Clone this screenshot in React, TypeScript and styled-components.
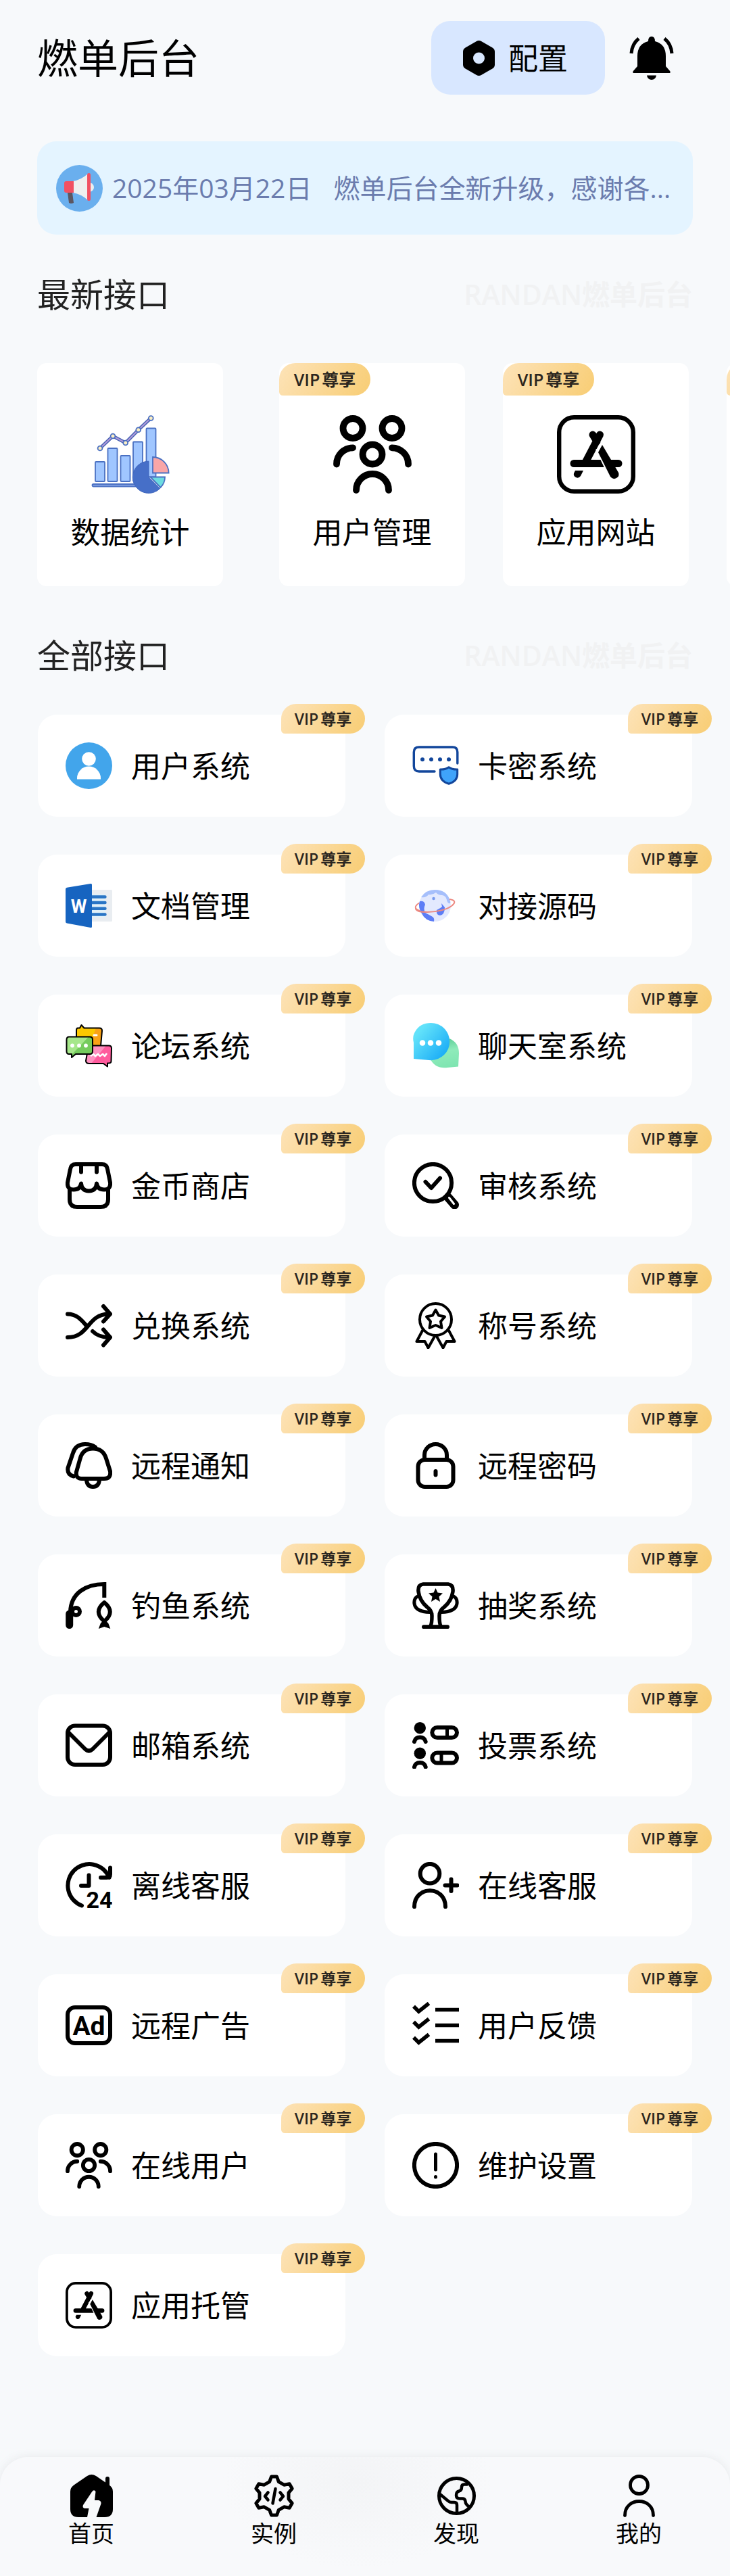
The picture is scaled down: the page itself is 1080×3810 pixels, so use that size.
import React from "react";
import styled, { createGlobalStyle, css } from "styled-components";

const GlobalStyle = createGlobalStyle`
  *, *::before, *::after { box-sizing: border-box; }
  body {
    margin: 0;
    background: #f7f9fb;
    color: #000;
    font-family: "Open Sans", "Noto Sans CJK SC", sans-serif;
  }
  h1, h2, p, ul { margin: 0; padding: 0; font-weight: 400; }
  ul { list-style: none; }
  a { color: inherit; text-decoration: none; }
  button { border: 0; padding: 0; background: none; color: inherit; font: inherit; cursor: pointer; }
  svg { display: block; flex: none; }
`;

const Page = styled.div`
  display: flex;
  flex-direction: column;
  min-height: 100vh;
  overflow-x: clip;
`;

const Header = styled.header`
  display: flex;
  align-items: center;
  gap: 36px;
  padding: 31px 83px 0 55px;
`;

const Title = styled.h1`
  flex: 1;
  font-size: 60px;
  line-height: 84px;
`;

const ConfigButton = styled.button`
  display: flex;
  align-items: center;
  gap: 20px;
  height: 109px;
  padding: 0 55px 0 47px;
  border-radius: 28px;
  background: #d8e7ff;
  font-size: 44px;
  line-height: 64px;
`;

const BellButton = styled.button`
  display: flex;
`;

const Notice = styled.a`
  display: flex;
  align-items: center;
  gap: 14px;
  height: 138px;
  margin: 69px 55px 0;
  padding: 0 28px;
  border-radius: 28px;
  background: #e4f4ff;
  color: #6b7cae;
  font-size: 39px;
  line-height: 56px;
  white-space: nowrap;
`;

const NoticeText = styled.p`
  display: flex;
  gap: 32px;
  min-width: 0;
`;

const SectionHead = styled.div<{ $top: number }>`
  display: flex;
  align-items: center;
  justify-content: space-between;
  height: 70px;
  margin: ${(p) => p.$top}px 55px 0;
`;

const SectionTitle = styled.h2`
  color: #222;
  font-size: 49px;
  line-height: 70px;
`;

const Watermark = styled.span`
  color: #f1f2f3;
  font-size: 41px;
  font-weight: 600;
  line-height: 60px;
`;

const Strip = styled.ul`
  display: flex;
  gap: 56px;
  margin-top: 67px;
  padding-left: 55px;
  overflow-x: auto;
  scrollbar-width: none;
`;

const StripItem = styled.li<{ $lead?: boolean }>`
  flex: none;
  width: 275px;
  margin-right: ${(p) => (p.$lead ? 27 : 0)}px;
`;

const StripCard = styled.a`
  position: relative;
  display: flex;
  flex-direction: column;
  align-items: center;
  gap: 25px;
  padding: 77px 0 48px;
  border-radius: 14px;
  background: #fff;
  font-size: 44px;
  line-height: 64px;
`;

const Grid = styled.ul`
  display: grid;
  grid-template-columns: 1fr 1fr;
  gap: 56px 58px;
  margin: 53px 56px 56px;
`;

const GridCard = styled.a`
  position: relative;
  display: flex;
  align-items: center;
  gap: 28px;
  height: 151px;
  padding: 0 41px;
  border-radius: 28px;
  background: #fff;
  font-size: 44px;
  line-height: 64px;
`;

const Badge = styled.span<{ $size: "large" | "small" }>`
  position: absolute;
  display: flex;
  align-items: center;
  justify-content: center;
  gap: 3px;
  background: linear-gradient(120deg, #fde3b8, #f8cd74);
  color: #2b2620;
  font-weight: 600;
  ${(p) =>
    p.$size === "large"
      ? css`
          top: 0;
          left: 0;
          width: 135px;
          height: 48px;
          border-radius: 26px 26px 26px 6px;
          font-size: 25px;
        `
      : css`
          top: -16px;
          right: -29px;
          width: 124px;
          height: 44px;
          border-radius: 24px 24px 24px 6px;
          font-size: 23px;
        `}
`;

const TabBar = styled.nav`
  position: sticky;
  bottom: 0;
  display: grid;
  grid-template-columns: repeat(4, 1fr);
  margin-top: auto;
  padding: 26px 0 41px;
  border-radius: 42px 42px 0 0;
  background: radial-gradient(ellipse 200px 130px at 49% 20%, #f3f4f6, #f8f9fb);
  box-shadow: 0 0 16px rgba(0, 0, 0, 0.07);
`;

const Tab = styled.a`
  display: flex;
  flex-direction: column;
  align-items: center;
  gap: 2px;
  font-size: 34px;
  line-height: 44px;
`;

/* ---------- icons ---------- */

type IconProps = { size?: number };

const Line = ({ box = 69, size = 69, width = 6, children }: { box?: number; size?: number; width?: number; children: React.ReactNode }) => (
  <svg
    width={size}
    height={size}
    viewBox={`0 0 ${box} ${box}`}
    fill="none"
    stroke="#000"
    strokeWidth={width}
    strokeLinecap="round"
    strokeLinejoin="round"
    aria-hidden="true"
  >
    {children}
  </svg>
);

const Plain = ({ box = 69, size = 69, children }: { box?: number; size?: number; children: React.ReactNode }) => (
  <svg width={size} height={size} viewBox={`0 0 ${box} ${box}`} aria-hidden="true">
    {children}
  </svg>
);

const HexIcon = () => (
  <svg width="47" height="52" viewBox="0 0 47 52" aria-hidden="true">
    <path
      fillRule="evenodd"
      d="M20 1q3.500-2 7 0l16.500 9.500q3.500 2 3.500 6v19q0 4-3.500 6L27 51q-3.500 2-7 0L3.500 41.500Q0 39.500 0 35.500v-19q0-4 3.500-6zM23.500 17.500a8.500 8.500 0 1 0 0 17 8.500 8.500 0 0 0 0-17z"
    />
  </svg>
);

const BellIcon = () => (
  <svg width="66" height="64" viewBox="0 0 66 64" aria-hidden="true">
    <path d="M33 0q5 0 5 7 16 4 16 22v15l6.500 7.500V54h-55v-2.500L12 44V29Q12 11 28 7q0-7 5-7zM26 57.500h14Q39 64 33 64t-7-6.500z" />
    <path d="M14 3Q4 11 3 25M52 3q10 8 11 22" fill="none" stroke="#000" strokeWidth="5" />
  </svg>
);

const MegaphoneIcon = () => (
  <Plain>
    <circle cx="34.5" cy="34.5" r="34.5" fill="#6aafee" />
    <path d="M17 41h7l2 15q-4 2-7 0z" fill="#5c5662" />
    <path d="M50 26q6 2 6 7t-6 7z" fill="#e9edf0" />
    <path d="M25 24q12-2 22-11v39q-10-9-22-11z" fill="#efefef" />
    <path d="M15 24h11v17H15q-3 0-3-3V27q0-3 3-3z" fill="#f15062" />
    <rect x="46" y="12" width="5" height="41" rx="2.5" fill="#f15062" />
  </Plain>
);

const ChartIcon = ({ size = 116 }: IconProps) => (
  <Plain box={116} size={size}>
    <g fill="#a0c6ff" stroke="#4a70c2" strokeWidth="1.8">
      <rect x="6" y="69" width="14" height="29" rx="1" />
      <rect x="24.500" y="49" width="14" height="49" rx="1" />
      <rect x="43.500" y="60" width="14" height="38" rx="1" />
      <rect x="62" y="39.500" width="14" height="58" rx="1" />
      <rect x="81.500" y="19.500" width="14" height="72" rx="1" />
      <rect x="1.500" y="102" width="90" height="3.500" rx="1.700" fill="#8ba8e8" />
    </g>
    <path d="M85 91.700V68.200a23.600 23.600 0 1 0 16.700 40.200z" fill="#466fc8" stroke="#3f66bd" />
    <path d="M91 85.500V62a23.600 23.600 0 0 1 23.600 23.500z" fill="#f9a6a7" stroke="#4a70c2" strokeWidth="1.8" />
    <path d="M87.500 91.500H109q0 9-6.500 15.500z" fill="#6ddce0" stroke="#4a70c2" strokeWidth="1.8" />
    <path d="M13 49l19-18 18.700 10 19-19.300L88.300 4.300" fill="none" stroke="#4a65b5" strokeWidth="5" />
    <path d="M13 49l19-18 18.700 10 19-19.300L88.300 4.300" fill="none" stroke="#b09ad9" strokeWidth="2" />
    <g fill="#fbeec3" stroke="#4a70c2" strokeWidth="1.8">
      <circle cx="13" cy="49" r="3.400" />
      <circle cx="32" cy="31" r="3.400" />
      <circle cx="50.700" cy="41" r="3.400" />
      <circle cx="69.700" cy="21.700" r="3.400" />
      <circle cx="88.300" cy="4.500" r="3.400" />
    </g>
  </Plain>
);

const UsersIcon = ({ size = 69 }: IconProps) => (
  <Line box={116} size={size} width={9.8}>
    <circle cx="29" cy="19.500" r="14.500" />
    <circle cx="87" cy="19.500" r="14.500" />
    <circle cx="58" cy="58" r="14.500" />
    <path d="M5 72.500A24 24 0 0 1 29 48.300M87 48.300a24 24 0 0 1 24 24.200M34 111a24 24 0 0 1 48 0" />
  </Line>
);

const AppStoreIcon = ({ size = 69 }: IconProps) => (
  <Line box={116} size={size} width={11}>
    <rect x="3.200" y="3.200" width="109.600" height="109.600" rx="22" strokeWidth="6.400" />
    <path d="M25 71.500h66M63.500 29L42 70M53 29l6 10" />
    <path d="M59 50l20 42" stroke="#fff" strokeWidth="4" strokeLinecap="butt" />
    <path d="M67 44l-6 11 18 36q4 5 9 2t3-8L80 66z" fill="#000" stroke="none" />
    <path d="M27 82h12l-4 8q-3 4-7 2t-3-6z" fill="#000" stroke="none" />
  </Line>
);

const AccountIcon = () => (
  <Plain>
    <circle cx="34.500" cy="34.500" r="34.500" fill="#42a5eb" />
    <circle cx="34.500" cy="24.500" r="10.300" fill="#fff" />
    <path d="M17 54.500V53a17.500 17.500 0 0 1 35 0v1.500z" fill="#fff" />
  </Plain>
);

const CardKeyIcon = () => (
  <Plain>
    <path
      d="M66.800 31V14.500Q66.800 7 59.500 7H10q-7.700 0-7.700 7.500V35q0 8 7.700 8h23"
      fill="none"
      stroke="#12469b"
      strokeWidth="3.400"
      strokeLinecap="round"
    />
    <g fill="#12469b">
      <circle cx="15" cy="25.300" r="3" />
      <circle cx="28" cy="25.300" r="3" />
      <circle cx="41" cy="25.300" r="3" />
      <circle cx="54" cy="25.300" r="3" />
    </g>
    <path
      d="M54 36.700q5 3.600 12.700 3.300v7q0 10.500-12.700 14.300Q41.300 57.500 41.300 47v-7q7.700.3 12.700-3.300z"
      fill="#3fa3fa"
      stroke="#12469b"
      strokeWidth="3"
      strokeLinejoin="round"
    />
  </Plain>
);

const WordIcon = () => (
  <Plain>
    <rect x="37" y="11" width="32" height="47" rx="1.500" fill="#e9edf1" />
    <path d="M39 21.500h19.500M39 30h19.500M39 38.700h19.500M39 47.500h19.500" stroke="#dff1fa" strokeWidth="8" />
    <path d="M39 21.500h19.500M39 30h19.500M39 38.700h19.500M39 47.500h19.500" stroke="#2a75c5" strokeWidth="4.400" strokeLinecap="round" />
    <path d="M0 10q0-2 2-2.300L37 2q2-.5 2 1.500v62q0 2-2 1.500L2 60.500Q0 60 0 58z" fill="#1664c0" />
    <text x="19.500" y="44.500" textAnchor="middle" fontFamily="Roboto, sans-serif" fontWeight="700" fontSize="27" fill="#fff">
      W
    </text>
  </Plain>
);

const PlanetIcon = () => (
  <Plain>
    <path d="M11 30C-1 37 5 43 22 43.500" fill="none" stroke="#ec8880" strokeWidth="1.800" />
    <circle cx="33.500" cy="34.500" r="23.500" fill="#e3e9fe" />
    <path d="M13 22Q20 11 33.500 11 50 11 55 25q2 4 1 6-4 1-5-5-1-6-7-7-6 0-9-4-5 4-11 3-3 5-11 4z" fill="#a6bffb" />
    <path d="M11 28q7-1 8 5-3 6 0 12 6 3 11 6 3 2 2 7-13-1-18-12Q8 37 11 28zM43 31l5 6q0 11-7 12-6-1-5-8 6-3 8-5z" fill="#5d7df6" />
    <circle cx="31.500" cy="24" r="2.200" fill="#7699ef" />
    <path d="M5 38q-1 6 17 6 25-1 36-9 10-8-3-10" fill="none" stroke="#ec8880" strokeWidth="2" />
  </Plain>
);

const ForumIcon = () => (
  <Plain>
    <g strokeWidth="2" strokeLinejoin="round">
      <path d="M18 8.500h3L23.500 4l4 4.500H50q4 0 4 4L52 35H16V12q0-3.500 2-3.500z" fill="#fcc800" />
      <path d="M45 8.500h5q4 0 4 4L52 35H35z" fill="#f9a216" />
      <path d="M18 8.500h3L23.500 4l4 4.500H50q4 0 4 4L52 35H16V12q0-3.500 2-3.500z" fill="none" stroke="#000" />
      <path d="M42 19h4" stroke="#fff" strokeWidth="3" strokeLinecap="round" />
      <path d="M34 34.500h30q4 0 4 4l-.500 19q0 3-4 3H62v5l-6-4.500H35q-5 0-5-4z" fill="#ff91c0" />
      <path d="M60 34.500h4q4 0 4 4l-.500 19q0 3-4 3H62v5l-6-4.500H38z" fill="#ff5b9d" />
      <path d="M34 34.500h30q4 0 4 4l-.500 19q0 3-4 3H62v5l-6-4.500H35q-5 0-5-4z" fill="none" stroke="#000" />
      <path d="M37 50l4-3 3 3 4-3 3 3 4-3 3 3 3-4" fill="none" stroke="#fff" strokeWidth="2.600" />
      <path d="M5 21.500h31q4 0 4 4V43q0 4-4 4H15l-6 5v-5H5q-3.500 0-3.500-4V26q0-4.500 3.500-4.500z" fill="#a6e78b" />
      <path d="M34 21.500h2q4 0 4 4V43q0 4-4 4H15l-6 5v-4z" fill="#75cb5d" />
      <path d="M5 21.500h31q4 0 4 4V43q0 4-4 4H15l-6 5v-5H5q-3.500 0-3.500-4V26q0-4.500 3.500-4.500z" fill="none" stroke="#000" />
    </g>
    <g fill="#fff">
      <circle cx="10" cy="34.500" r="2.900" />
      <circle cx="20" cy="34.500" r="2.900" />
      <circle cx="30" cy="34.500" r="2.900" />
    </g>
  </Plain>
);

const ChatIcon = () => (
  <Plain>
    <defs>
      <linearGradient id="chatBlue" x1="0.2" y1="0.2" x2="1" y2="0.9">
        <stop offset="0" stopColor="#62e2fa" />
        <stop offset="1" stopColor="#12a6f6" />
      </linearGradient>
      <linearGradient id="chatGreen" x1="0.6" y1="0" x2="0.8" y2="1">
        <stop offset="0" stopColor="#5fcf98" />
        <stop offset="0.4" stopColor="#8eebba" />
        <stop offset="1" stopColor="#7de4b0" />
      </linearGradient>
    </defs>
    <path d="M55 24q14 6 14 22l-1 19.500-16 1.500q-18 2-25-12z" fill="url(#chatGreen)" />
    <path d="M27.600 1a27.600 27.600 0 1 1 0 55.200L2 54V30Q0 22 3 16 10 1 27.600 1z" fill="url(#chatBlue)" />
    <g fill="#fff">
      <circle cx="15" cy="30.500" r="4.300" />
      <circle cx="27" cy="30.500" r="4.300" />
      <circle cx="39" cy="30.500" r="4.300" />
    </g>
  </Plain>
);

const ShopIcon = () => (
  <Line>
    <path d="M15 3h39q7 0 8 7l4 20q1 10.500-9 10.500-9.500 0-11-9-1 11-11.500 11T23 31.500q-1.500 9-11 9-10 0-9-10.500l4-20q1-7 8-7z" />
    <path d="M23 4v10.500M46 4v10.500M6 41v14q0 11 11 11h35q11 0 11-11V41" />
  </Line>
);

const AuditIcon = () => (
  <Line>
    <path d="M53 52l9.500 11" strokeWidth="13" />
    <path d="M54.500 52.500l7 9" stroke="#fff" strokeWidth="3" />
    <circle cx="30.500" cy="30.500" r="27.600" />
    <path d="M19.500 29l8.500 9 13-14.500" />
  </Line>
);

const ShuffleIcon = () => (
  <Line>
    <path d="M3 17.500c13 0 20 8 28 17.500M3 52c32 0 29-34.500 61-34.500M40 43c5 5 12 9 24 9M56 6l10 11.500L56 28.500M56 40.500L66 52 56 63.500" />
  </Line>
);

const MedalIcon = () => (
  <Line width={4}>
    <circle cx="34.500" cy="25.500" r="23.500" />
    <path d="M34.500 11.500l4.500 8 9 2-6 7 1.500 9.500-9-4-9 4 1.500-9.500-6-7 9-2z" />
    <path d="M15 42L6.500 58h12l5 9.500 9.500-17M54 42l8.500 16h-12l-5 9.500-9.500-17" />
  </Line>
);

const BellsIcon = () => (
  <Line>
    <path d="M40.500 9.500c-9.500 0-16.500 5-19 15L16 44q-1.500 10 8 10h33q10.500 0 9-11l-6-19q-4.500-14.500-19.500-14.500z" />
    <path d="M44 7.500Q38 3 29 3 15 3 11 16L3.500 38Q2 48 12 50.500M31 56q1 10 9.500 10T50 56" />
  </Line>
);

const LockIcon = () => (
  <Line>
    <rect x="8.500" y="26" width="52" height="40" rx="10" />
    <path d="M18 25v-6a16.500 16 0 0 1 33 0v6M34.500 43v5.500" />
  </Line>
);

const FishingIcon = () => (
  <Line>
    <path d="M57.300 23V3C30 3 8 16 7 44" strokeLinecap="butt" strokeLinejoin="miter" />
    <path d="M5.700 47v16.500" strokeWidth="11" />
    <circle cx="15.500" cy="43.500" r="5.500" />
    <path d="M57.300 30q-17 14 0 28 17-14 0-28z" />
    <path d="M57.300 55l6 6 3 8-9-3-8.500 3 3-8z" fill="#000" stroke="none" />
  </Line>
);

const TrophyIcon = () => (
  <Line>
    <path d="M16 3h37q8 1 7 11-2 14-13 23-7 5-7 13 0 11 2 15M16 3Q8 4 9 14q2 14 13 23 7 5 7 13 0 11-2 15" strokeWidth="5.500" />
    <path d="M8 21q-6 3-5 11 2 12 23 12.500M61 21q6 3 5 11-2 12-23 12.500" strokeWidth="5" />
    <path d="M17 66.200h35" />
    <path d="M34.500 9l3 6.500 7.500 1-5.500 5 1.500 7.500-6.500-4-6.500 4 1.500-7.500-5.500-5 7.500-1z" fill="#000" stroke="none" />
  </Line>
);

const MailIcon = () => (
  <Line>
    <rect x="3" y="5.500" width="63" height="57.500" rx="11" />
    <path d="M5 16l24 24q5.500 5 11 0l24-24" />
  </Line>
);

const VoteIcon = () => (
  <Line>
    {[0, 37.5].map((y, i) => (
      <g key={y} transform={`translate(0 ${y})`}>
        <circle cx="11.300" cy="8.700" r="8.700" fill="#000" stroke="none" />
        <path d="M3 29q1.500-6.500 8.300-6.500T19.700 29" />
        <rect x="29.300" y="8" width="36.700" height="15" rx="7.500" />
        <path d={i === 0 ? "M51.500 9v13" : "M43 9v13"} strokeWidth="5" strokeLinecap="butt" />
      </g>
    ))}
  </Line>
);

const ServiceIcon = () => (
  <Line>
    <path d="M24 64.500A31.700 31.700 0 1 1 64.500 23M66 8.500V18q0 5-5 5h-9M34.500 19.500V35H23" />
    <text x="50" y="68" textAnchor="middle" fontFamily="Roboto, sans-serif" fontWeight="700" fontSize="34" fill="#000" stroke="none">
      24
    </text>
  </Line>
);

const UserPlusIcon = () => (
  <Line>
    <circle cx="26" cy="17.200" r="14.300" />
    <path d="M3 66.200c0-32 46-32 46 0M57.500 25.500V43M48.500 34.500h18" />
  </Line>
);

const AdIcon = () => (
  <Line>
    <rect x="3" y="8" width="63" height="53" rx="11" />
    <text x="34.500" y="49" textAnchor="middle" fontFamily="Roboto, sans-serif" fontWeight="700" fontSize="39" fill="#000" stroke="none">
      Ad
    </text>
  </Line>
);

const ChecklistIcon = () => (
  <Line width={5.6}>
    {[0, 23, 46].map((y) => (
      <path key={y} d={`M2 ${y + 6.5}l7.500 7.500L24.500 ${y + 2}M34 ${y + 11.5}h35`} strokeLinecap="butt" strokeLinejoin="miter" />
    ))}
  </Line>
);

const AlertIcon = () => (
  <Line>
    <circle cx="34.500" cy="34.500" r="31.600" />
    <path d="M34.500 18v23M34.500 51.500v.500" strokeWidth="5" />
  </Line>
);

const HomeIcon = () => (
  <Plain box={63} size={63}>
    <path d="M52 6q0-3 3-3t3 3v14h-6z" />
    <path d="M25 2q6.500-4 13 0l19 13q6 4 6 10v26q0 12-12 12H12Q0 63 0 51V25q0-6 6-10z" />
    <path d="M32 25.500q3-4 5.500-.500L36 38h6q4 1 3.500 5L38.500 63H25l2.500-13H21q-3.500-1-2-5z" fill="#f8f9fb" />
  </Plain>
);

const gearOutline = Array.from({ length: 6 })
  .flatMap((_, k) =>
    [
      [-8, 28.8],
      [8, 28.8],
      [18, 22],
      [42, 22],
    ].map(([shift, radius]) => {
      const angle = ((k * 60 - 90 + shift) * Math.PI) / 180;
      return `${(31.5 + radius * Math.cos(angle)).toFixed(1)},${(31.5 + radius * Math.sin(angle)).toFixed(1)}`;
    })
  )
  .join(" ");

const CodeGearIcon = () => (
  <Line box={63} size={63} width={5}>
    <polygon points={gearOutline} />
    <path d="M22.500 26.500L18 32l4.500 5.500M40.500 26.500L45 32l-4.500 5.500M33.500 21l-4 21.500" strokeWidth="4.500" />
  </Line>
);

const GlobeIcon = () => (
  <Line box={63} size={63} width={5}>
    <circle cx="31.500" cy="31.500" r="26" />
    <path
      d="M48 14.500h-5q-4 0-4 4 0 5-4 6-4 1-4 6t5 5h4q4 0 4.500 4 0 5 7 9M7 29l12 10q2 2 5 2h4q4 0 4 4v12"
      strokeWidth="4.500"
      strokeLinecap="butt"
    />
  </Line>
);

const MeIcon = () => (
  <Line box={63} size={63} width={4.8}>
    <circle cx="31.500" cy="15.500" r="13" />
    <path d="M10.500 60.500c0-28 42-28 42 0" />
  </Line>
);

/* ---------- data ---------- */

const latest = [
  { label: "数据统计", icon: <ChartIcon />, vip: false },
  { label: "用户管理", icon: <UsersIcon size={116} />, vip: true },
  { label: "应用网站", icon: <AppStoreIcon size={116} />, vip: true },
  { label: "应用托管", icon: <AppStoreIcon size={116} />, vip: true },
];

const modules = [
  { label: "用户系统", icon: <AccountIcon /> },
  { label: "卡密系统", icon: <CardKeyIcon /> },
  { label: "文档管理", icon: <WordIcon /> },
  { label: "对接源码", icon: <PlanetIcon /> },
  { label: "论坛系统", icon: <ForumIcon /> },
  { label: "聊天室系统", icon: <ChatIcon /> },
  { label: "金币商店", icon: <ShopIcon /> },
  { label: "审核系统", icon: <AuditIcon /> },
  { label: "兑换系统", icon: <ShuffleIcon /> },
  { label: "称号系统", icon: <MedalIcon /> },
  { label: "远程通知", icon: <BellsIcon /> },
  { label: "远程密码", icon: <LockIcon /> },
  { label: "钓鱼系统", icon: <FishingIcon /> },
  { label: "抽奖系统", icon: <TrophyIcon /> },
  { label: "邮箱系统", icon: <MailIcon /> },
  { label: "投票系统", icon: <VoteIcon /> },
  { label: "离线客服", icon: <ServiceIcon /> },
  { label: "在线客服", icon: <UserPlusIcon /> },
  { label: "远程广告", icon: <AdIcon /> },
  { label: "用户反馈", icon: <ChecklistIcon /> },
  { label: "在线用户", icon: <UsersIcon /> },
  { label: "维护设置", icon: <AlertIcon /> },
  { label: "应用托管", icon: <AppStoreIcon /> },
];

const tabs = [
  { label: "首页", icon: <HomeIcon /> },
  { label: "实例", icon: <CodeGearIcon /> },
  { label: "发现", icon: <GlobeIcon /> },
  { label: "我的", icon: <MeIcon /> },
];

const VipBadge = ({ size }: { size: "large" | "small" }) => (
  <Badge $size={size}>
    <span>VIP</span>
    <span>尊享</span>
  </Badge>
);

export default function App() {
  return (
    <Page lang="zh-CN">
      <GlobalStyle />
      <Header>
        <Title>燃单后台</Title>
        <ConfigButton type="button">
          <HexIcon />
          配置
        </ConfigButton>
        <BellButton type="button" aria-label="通知">
          <BellIcon />
        </BellButton>
      </Header>

      <main>
        <Notice href="#notice">
          <MegaphoneIcon />
          <NoticeText>
            <span>2025年03月22日</span>
            <span>燃单后台全新升级，感谢各...</span>
          </NoticeText>
        </Notice>

        <SectionHead $top={53}>
          <SectionTitle>最新接口</SectionTitle>
          <Watermark>RANDAN燃单后台</Watermark>
        </SectionHead>
        <Strip>
          {latest.map((item, i) => (
            <StripItem key={item.label} $lead={i === 0}>
              <StripCard href="#latest">
                {item.icon}
                <span>{item.label}</span>
                {item.vip && <VipBadge size="large" />}
              </StripCard>
            </StripItem>
          ))}
        </Strip>

        <SectionHead $top={67}>
          <SectionTitle>全部接口</SectionTitle>
          <Watermark>RANDAN燃单后台</Watermark>
        </SectionHead>
        <Grid>
          {modules.map((item) => (
            <li key={item.label}>
              <GridCard href="#module">
                {item.icon}
                <span>{item.label}</span>
                <VipBadge size="small" />
              </GridCard>
            </li>
          ))}
        </Grid>
      </main>

      <TabBar>
        {tabs.map((tab) => (
          <Tab key={tab.label} href="#tab">
            {tab.icon}
            {tab.label}
          </Tab>
        ))}
      </TabBar>
    </Page>
  );
}
